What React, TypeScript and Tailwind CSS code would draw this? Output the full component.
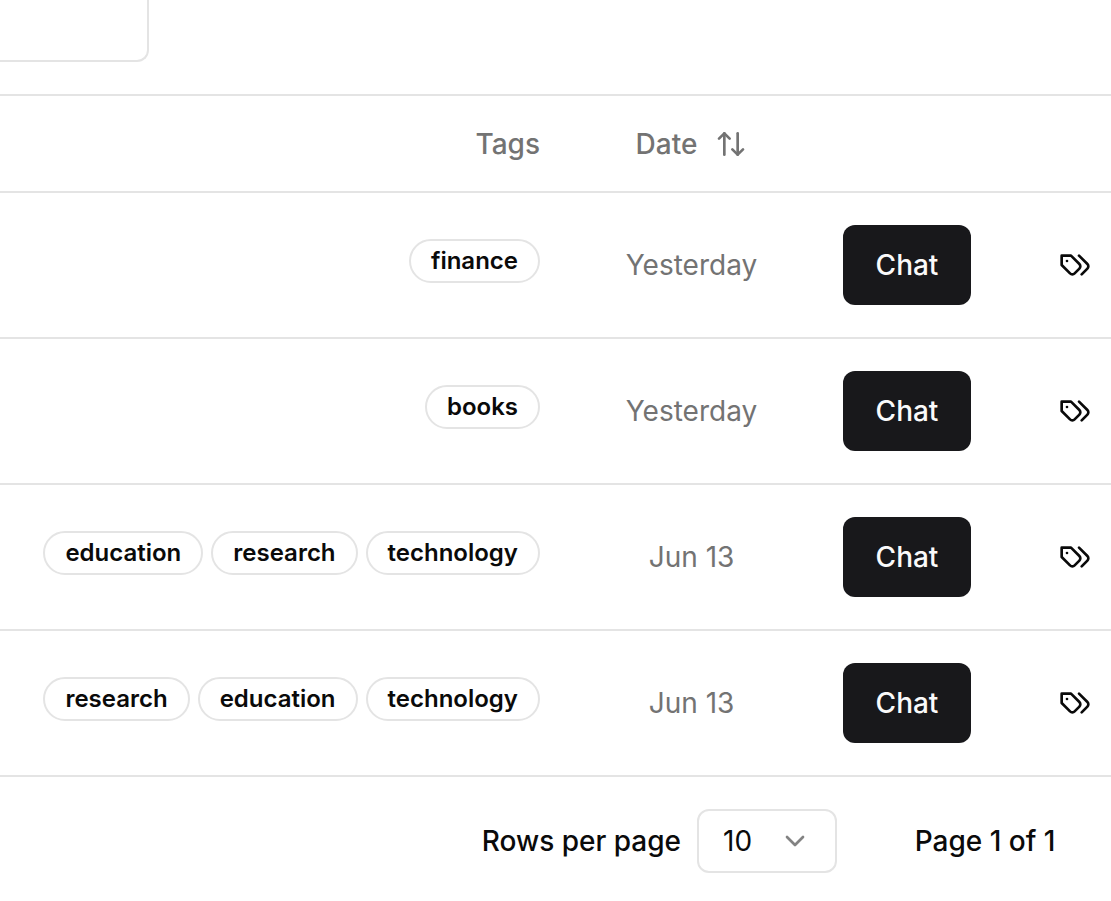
import { ArrowUpDown, ChevronDown } from "lucide-react";

type Row = { id: number; tags: string[]; date: string };

const rows: Row[] = [
  { id: 1, tags: ["finance"], date: "Yesterday" },
  { id: 2, tags: ["books"], date: "Yesterday" },
  { id: 3, tags: ["education", "research", "technology"], date: "Jun 13" },
  { id: 4, tags: ["research", "education", "technology"], date: "Jun 13" },
];

function TagsIcon() {
  return (
    <svg
      viewBox="0 0 24 24"
      fill="none"
      stroke="currentColor"
      strokeWidth="2"
      strokeLinecap="round"
      strokeLinejoin="round"
      className="size-8"
      aria-hidden="true"
    >
      <path d="M9 5H2v7l6.29 6.29c.94.94 2.48.94 3.42 0l3.58-3.58c.94-.94.94-2.48 0-3.42L9 5Z" />
      <path d="M6 9.01V9" />
      <path d="m15 5 6.3 6.3a2.4 2.4 0 0 1 0 3.4L17 19" />
    </svg>
  );
}

function Badge({ label }: { label: string }) {
  return (
    <span className="rounded-full border-2 border-[#e4e4e4] px-5 py-1 text-2xl leading-8 font-semibold">
      {label}
    </span>
  );
}

function DocumentRow({ row }: { row: Row }) {
  return (
    <tr className="border-b-2 border-[#e4e4e4]">
      <td className="px-4 py-8">
        <div className="flex justify-end gap-2 pb-2">
          {row.tags.map((tag) => (
            <Badge key={tag} label={tag} />
          ))}
        </div>
      </td>
      <td className="px-4 text-center text-[#737373]">{row.date}</td>
      <td className="px-4 py-8">
        <button
          type="button"
          className="block h-20 w-full rounded-xl bg-[#18181b] font-medium text-[#fafafa]"
        >
          Chat
        </button>
      </td>
      <td className="pr-5 text-right">
        <button type="button" aria-label="Edit tags" className="ml-auto block">
          <TagsIcon />
        </button>
      </td>
    </tr>
  );
}

export default function App() {
  return (
    <main className="min-h-screen bg-white font-['Inter',sans-serif] text-[28px] leading-10 text-[#0a0a0a]">
      <input
        type="text"
        aria-label="Filter documents"
        className="block h-[62px] w-[149px] rounded-br-xl border-r-2 border-b-2 border-[#e4e4e4] px-6 outline-none"
      />
      <table className="mt-8 w-full table-fixed border-collapse border-t-2 border-[#e4e4e4]">
        <colgroup>
          <col />
          <col className="w-[271px]" />
          <col className="w-40" />
          <col className="w-[124px]" />
        </colgroup>
        <thead>
          <tr className="h-[97px] border-b-2 border-[#e4e4e4] text-[#737373]">
            <th className="px-4 text-right font-medium">Tags</th>
            <th className="px-4 font-medium">
              <button type="button" className="flex w-full items-center justify-center gap-[18px]">
                Date
                <ArrowUpDown className="size-8" aria-hidden="true" />
              </button>
            </th>
            <td />
            <td />
          </tr>
        </thead>
        <tbody>
          {rows.map((row) => (
            <DocumentRow key={row.id} row={row} />
          ))}
        </tbody>
      </table>
      <div className="flex items-center justify-end pt-8 pr-[26px] font-medium">
        <label htmlFor="page-size" className="mr-4">
          Rows per page
        </label>
        <div className="relative mr-12">
          <select
            id="page-size"
            defaultValue="10"
            className="block h-16 w-[140px] appearance-none rounded-xl border-2 border-[#e4e4e4] bg-white px-6 font-normal outline-none"
          >
            <option>10</option>
            <option>20</option>
            <option>50</option>
          </select>
          <ChevronDown
            className="pointer-events-none absolute top-4 right-[26px] size-8 opacity-50"
            aria-hidden="true"
          />
        </div>
        <p className="w-[200px] text-center">Page 1 of 1</p>
      </div>
    </main>
  );
}
